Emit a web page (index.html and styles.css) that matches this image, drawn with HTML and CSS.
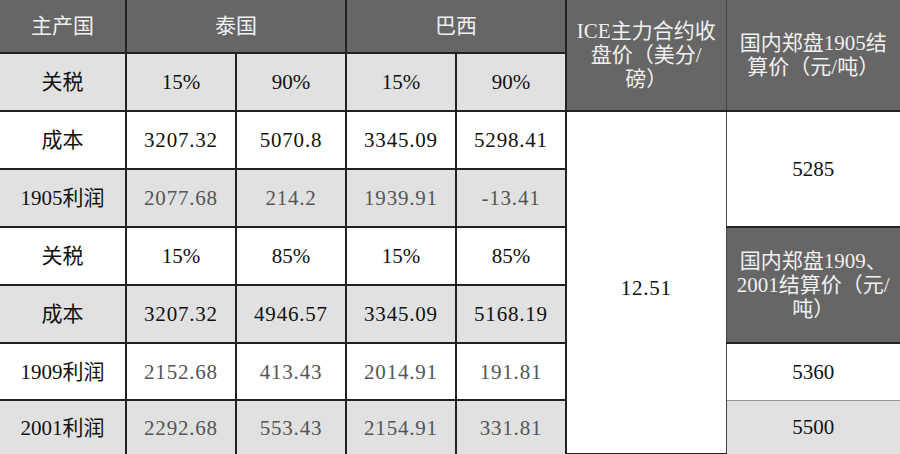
FILE: index.html
```html
<!DOCTYPE html>
<html lang="zh-CN">
<head>
<meta charset="utf-8">
<title>主产国成本利润表</title>
<link rel="stylesheet" href="styles.css">
</head>
<body>
<table class="sheet">
  <colgroup>
    <col class="c-label">
    <col class="c-val">
    <col class="c-val">
    <col class="c-val">
    <col class="c-val">
    <col class="c-ice">
    <col class="c-zz">
  </colgroup>
  <tr class="r-head">
    <td class="dark">主产国</td>
    <td class="dark" colspan="2">泰国</td>
    <td class="dark" colspan="2">巴西</td>
    <td class="dark multi ice" rowspan="2">ICE主力合约收<br>盘价（美分/<br>磅）</td>
    <td class="dark multi zz" rowspan="2">国内郑盘1905结<br>算价（元/吨）</td>
  </tr>
  <tr class="r-mid gray">
    <td>关税</td>
    <td>15%</td>
    <td>90%</td>
    <td>15%</td>
    <td>90%</td>
  </tr>
  <tr class="r-mid white">
    <td>成本</td>
    <td class="num">3207.32</td>
    <td class="num">5070.8</td>
    <td class="num">3345.09</td>
    <td class="num">5298.41</td>
    <td class="white ice price num" rowspan="6">12.51</td>
    <td class="white zz" rowspan="2">5285</td>
  </tr>
  <tr class="r-mid gray profit">
    <td>1905利润</td>
    <td class="num">2077.68</td>
    <td class="num">214.2</td>
    <td class="num">1939.91</td>
    <td class="num">-13.41</td>
  </tr>
  <tr class="r-mid white">
    <td>关税</td>
    <td>15%</td>
    <td>85%</td>
    <td>15%</td>
    <td>85%</td>
    <td class="dark multi zz" rowspan="2">国内郑盘1909、<br>2001结算价（元/<br>吨）</td>
  </tr>
  <tr class="r-mid gray">
    <td>成本</td>
    <td class="num">3207.32</td>
    <td class="num">4946.57</td>
    <td class="num">3345.09</td>
    <td class="num">5168.19</td>
  </tr>
  <tr class="r-7 white profit">
    <td>1909利润</td>
    <td class="num">2152.68</td>
    <td class="num">413.43</td>
    <td class="num">2014.91</td>
    <td class="num">191.81</td>
    <td class="white zz thin-b">5360</td>
  </tr>
  <tr class="r-8 gray profit">
    <td>2001利润</td>
    <td class="num">2292.68</td>
    <td class="num">553.43</td>
    <td class="num">2154.91</td>
    <td class="num">331.81</td>
    <td class="gray zz thin-t">5500</td>
  </tr>
</table>
</body>
</html>
```

FILE: styles.css
```css
html, body {
  margin: 0;
  padding: 0;
  background: #ffffff;
}

.sheet {
  width: 900px;
  border-collapse: collapse;
  table-layout: fixed;
  font-family: "Liberation Serif", "Noto Sans CJK SC", serif;
  font-size: 21px;
  color: #111111;
}

.c-label { width: 126px; }
.c-val { width: 110px; }
.c-ice { width: 160px; }
.c-zz { width: 174px; }

.sheet td {
  border: 2px solid #222222;
  text-align: center;
  vertical-align: middle;
  padding: 0;
  line-height: 24px;
  white-space: nowrap;
}

.sheet tr:first-child td { border-top: none; }
.sheet tr:last-child td { border-bottom: none; }
.sheet td:first-child { border-left: none; }

.r-head { height: 53px; }
.r-mid { height: 58px; }
.r-7 { height: 57px; }
.r-8 { height: 54px; }

.gray td { background: #e1e1e1; }
.white td { background: #ffffff; }

.sheet td.dark {
  background: #666666;
  color: #f0f0f0;
}

.sheet td.white { background: #ffffff; }
.sheet td.gray { background: #e1e1e1; }

.sheet td.num { letter-spacing: 0.8px; }

.profit td { color: #555555; }
.profit td:first-child { color: #111111; }
.sheet td.zz, .sheet td.price { color: #111111; }
.sheet td.dark.zz { color: #f0f0f0; }

.sheet td.price { padding-top: 10px; }

.multi {
  line-height: 28px;
  white-space: nowrap;
}

.sheet td.ice {
  border-right: 1px solid #444444;
}

.sheet td.zz {
  border-left: 1px solid #444444;
  border-right: none;
}

.sheet td.thin-b { border-bottom: 1px solid #999999; }
.sheet td.thin-t { border-top: 1px solid #999999; }
```
